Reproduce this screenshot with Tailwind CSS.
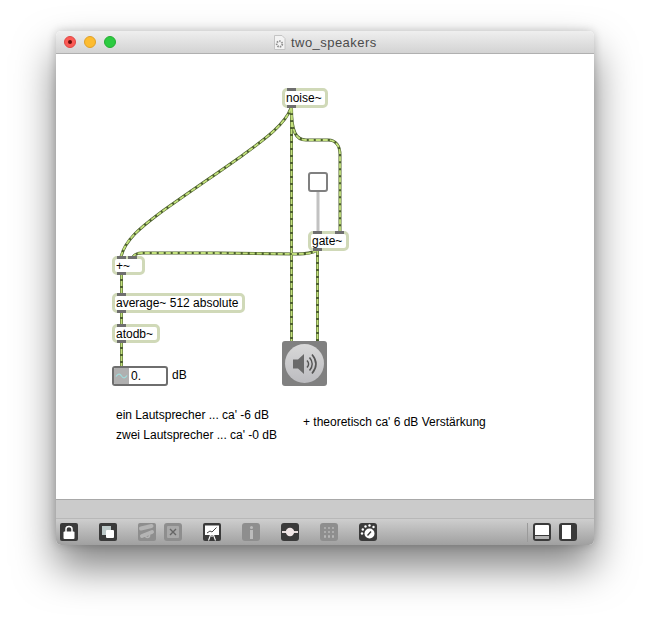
<!DOCTYPE html>
<html lang="en">
<head>
    <meta charset="UTF-8">
    <title>two_speakers</title>
    <script src="https://cdn.jsdelivr.net/npm/@tailwindcss/browser@4"></script>
</head>
<body class="bg-white w-[650px] h-[625px] overflow-hidden pl-[56px] pt-[31px] font-['Liberation_Sans',Arial,sans-serif]">
    <!-- Window -->
    <div class="w-[538px] h-[514px] flex flex-col rounded-[5px] overflow-hidden shadow-[0_22px_40px_rgba(0,0,0,0.5),0_0_10px_rgba(0,0,0,0.2)]">
        <!-- Title bar -->
        <div class="h-[23px] shrink-0 relative flex items-center pl-[8px] gap-[8px] bg-gradient-to-b from-[#efefef] to-[#d3d3d3] border-b border-[#b0b0b0]">
            <div class="w-[12px] h-[12px] rounded-full bg-[#fb5b55] border border-[#df4744] flex items-center justify-center"><div class="w-[4px] h-[4px] rounded-full bg-[#6b0d0a]"></div></div>
            <div class="w-[12px] h-[12px] rounded-full bg-[#fdbc30] border border-[#dfa028]"></div>
            <div class="w-[12px] h-[12px] rounded-full bg-[#2ccb41] border border-[#25ad32]"></div>
            <div class="absolute left-[217px] top-[4px] flex items-center gap-[5px]">
                <svg width="13" height="15" viewBox="0 0 13 15"><path d="M1.500 .5H9L12 3.500V14.500H1.500Z" fill="#f3f3f3" stroke="#c4c4c4"/><circle cx="6.500" cy="9" r="2.800" fill="none" stroke="#8e8e8e" stroke-width="1.800" stroke-dasharray="1.500 1"/></svg>
                <span class="text-[13px] leading-[15px] text-[#4b4b4b] tracking-[0.45px]">two_speakers</span>
            </div>
        </div>

        <!-- Patcher canvas: objects sit at their own places on it -->
        <div class="h-[445px] shrink-0 relative bg-white text-[12px] leading-[15px] text-black">
            <svg class="absolute left-0 top-0" width="538" height="445" viewBox="56 54 538 445" fill="none">
                <defs>
                    <path id="c1" d="M291 108C285 125 262 141 243 155C225 168 185 195 160 213C140 228 125 240 121 257"/>
                    <path id="c2" d="M291.500 108V341"/>
                    <path id="c3" d="M291.500 108C291.500 132 296 140 306 140H328C336 140 340 146 340 155V232"/>
                    <path id="c4" d="M317 250C313 253 308 254 295 254L217 253H142C138 253 135 254 133 257"/>
                    <path id="c5" d="M317.500 250V341"/>
                    <path id="c6" d="M121.500 274V293"/>
                    <path id="c7" d="M121.500 312V324"/>
                    <path id="c8" d="M121.500 342V366"/>
                </defs>
                <path d="M318 192V232" stroke="#c2c2c2" stroke-width="3"/>
                <g stroke="#4c5f2e" stroke-width="3">
                    <use href="#c1"/><use href="#c2"/><use href="#c3"/><use href="#c4"/><use href="#c5"/><use href="#c6"/><use href="#c7"/><use href="#c8"/>
                </g>
                <g stroke="#c2e07c" stroke-width="1.800" stroke-dasharray="5 2">
                    <use href="#c1"/><use href="#c2"/><use href="#c3"/><use href="#c4"/><use href="#c5"/><use href="#c6"/><use href="#c7"/><use href="#c8"/>
                </g>
            </svg>

            <!-- noise~ -->
            <div class="absolute left-[226px] top-[34px] w-[46px] h-[20px] rounded-[5px] border-[3px] border-[#d0d9b8] bg-white pl-[1px] whitespace-nowrap">noise~</div>
            <div class="absolute left-[231px] top-[34px] w-[9px] h-[3px] bg-[#6e6e6e]"></div>
            <div class="absolute left-[231px] top-[51px] w-[9px] h-[3px] bg-[#6e6e6e]"></div>

            <!-- toggle -->
            <div class="absolute left-[252px] top-[118px] w-[20px] h-[20px] rounded-[3px] border-2 border-[#808080] bg-white"></div>

            <!-- gate~ -->
            <div class="absolute left-[252px] top-[177px] w-[41px] h-[20px] rounded-[5px] border-[3px] border-[#d0d9b8] bg-white pl-[1px] whitespace-nowrap">gate~</div>
            <div class="absolute left-[257px] top-[177px] w-[9px] h-[3px] bg-[#6e6e6e]"></div>
            <div class="absolute left-[279px] top-[177px] w-[9px] h-[3px] bg-[#6e6e6e]"></div>
            <div class="absolute left-[257px] top-[194px] w-[9px] h-[3px] bg-[#6e6e6e]"></div>

            <!-- +~ -->
            <div class="absolute left-[56px] top-[202px] w-[33px] h-[19px] rounded-[5px] border-[3px] border-[#d0d9b8] bg-white pl-[1px] whitespace-nowrap">+~</div>
            <div class="absolute left-[61px] top-[202px] w-[9px] h-[3px] bg-[#6e6e6e]"></div>
            <div class="absolute left-[72px] top-[202px] w-[9px] h-[3px] bg-[#6e6e6e]"></div>
            <div class="absolute left-[61px] top-[218px] w-[9px] h-[3px] bg-[#6e6e6e]"></div>

            <!-- average~ -->
            <div class="absolute left-[56px] top-[239px] w-[133px] h-[20px] rounded-[5px] border-[3px] border-[#d0d9b8] bg-white pl-[1px] whitespace-nowrap">average~ 512 absolute</div>
            <div class="absolute left-[61px] top-[239px] w-[9px] h-[3px] bg-[#6e6e6e]"></div>
            <div class="absolute left-[61px] top-[256px] w-[9px] h-[3px] bg-[#6e6e6e]"></div>

            <!-- atodb~ -->
            <div class="absolute left-[56px] top-[270px] w-[48px] h-[19px] rounded-[5px] border-[3px] border-[#d0d9b8] bg-white pl-[1px] whitespace-nowrap">atodb~</div>
            <div class="absolute left-[61px] top-[270px] w-[9px] h-[3px] bg-[#6e6e6e]"></div>
            <div class="absolute left-[61px] top-[286px] w-[9px] h-[3px] bg-[#6e6e6e]"></div>

            <!-- number~ box -->
            <div class="absolute left-[56px] top-[312px] w-[56px] h-[20px] rounded-[3px] border-2 border-[#6e6e6e] bg-white flex items-center overflow-hidden">
                <div class="w-[15px] h-full bg-[#b0b0b0] flex items-center justify-center">
                    <svg width="13" height="6" viewBox="0 0 13 6" fill="none"><path d="M1 3.500C3 .5 5 .5 6.500 3C8 5.500 10 5.500 12 2.500" stroke="#9fdcdc" stroke-width="1.300"/></svg>
                </div>
                <span class="pl-[2px]">0.</span>
            </div>
            <div class="absolute left-[116px] top-[314px]">dB</div>

            <!-- ezdac~ -->
            <div class="absolute left-[226px] top-[287px] w-[45px] h-[45px] rounded-[3px] bg-[#808080] flex items-center justify-center">
                <div class="w-[39px] h-[39px] rounded-full bg-gradient-to-b from-[#d8d8d8] to-[#bcbcc0] flex items-center justify-center">
                    <svg width="30" height="26" viewBox="0 0 30 26" fill="none">
                        <path d="M3 8.500H8L14 3V23L8 17.500H3Z" fill="#6a6a6a"/>
                        <path d="M17 9.500C19 11.500 19 14.500 17 16.500" stroke="#555" stroke-width="1.600"/>
                        <path d="M19.500 6.500C23 10.500 23 15.500 19.500 19.500" stroke="#555" stroke-width="1.600"/>
                        <path d="M22 3.500C27 9.500 27 16.500 22 22.500" stroke="#555" stroke-width="1.600"/>
                    </svg>
                </div>
            </div>

            <!-- comments -->
            <div class="absolute left-[60px] top-[354px] whitespace-nowrap">ein Lautsprecher ... ca' -6 dB</div>
            <div class="absolute left-[60px] top-[374px] whitespace-nowrap">zwei Lautsprecher ... ca' -0 dB</div>
            <div class="absolute left-[247px] top-[361px] whitespace-nowrap">+ theoretisch ca' 6 dB Verstärkung</div>
        </div>

        <!-- Empty band above the toolbar -->
        <div class="h-[20px] shrink-0 bg-[#cbcbcb] border-t border-b border-t-[#a8a8a8] border-b-[#b8b8b8]"></div>

        <!-- Toolbar -->
        <div class="flex-1 flex items-center pl-[4px] bg-gradient-to-b from-[#cecece] to-[#a0a0a0] border-b border-[#8f8f8f]">
            <!-- lock -->
            <div class="w-[18px] h-[18px] rounded-[2px] bg-[#3a3a3a] flex items-center justify-center">
                <svg width="14" height="14" viewBox="0 0 14 14" fill="none"><path d="M4 7V4C4 .8 10 .8 10 4V7" stroke="#fff" stroke-width="1.500"/><rect x="1.500" y="6.500" width="11" height="7.500" rx="1" fill="#fff"/></svg>
            </div>
            <!-- presentation layers -->
            <div class="ml-[21px] w-[18px] h-[18px] rounded-[2px] bg-[#3a3a3a] flex items-center justify-center">
                <svg width="14" height="14" viewBox="0 0 14 14"><rect x="1" y="1" width="9" height="9" fill="#bcc8c8"/><rect x="5" y="5" width="8" height="8" rx="1" fill="#fff"/></svg>
            </div>
            <!-- cylinders, disabled -->
            <div class="ml-[21px] w-[18px] h-[18px] rounded-[2px] bg-[#8e8e8e] flex items-center justify-center">
                <svg width="18" height="18" viewBox="0 0 18 18" fill="none" stroke="#b4b4b4" stroke-linecap="round" stroke-width="4"><path d="M3 5.500L13.500 3"/><path d="M4 13L14 9"/><circle cx="9.500" cy="12.500" r=".8"/></svg>
            </div>
            <div class="ml-[8px] w-[18px] h-[18px] rounded-[3px] bg-[#8e8e8e] flex items-center justify-center">
                <div class="w-[12px] h-[12px] bg-[#a9a9a9] rounded-[1px] flex items-center justify-center">
                    <svg width="8" height="8" viewBox="0 0 8 8" stroke="#666" stroke-width="1.400"><path d="M1 1L7 7M7 1L1 7"/></svg>
                </div>
            </div>
            <!-- presentation chart -->
            <div class="ml-[21px] w-[18px] h-[18px] rounded-[2px] bg-[#3a3a3a] flex items-center justify-center">
                <svg width="16" height="17" viewBox="0 0 16 17" fill="none"><rect x="1" y="1.500" width="14" height="9.500" fill="#fff"/><path d="M3 9L6 7L8 8L12.500 3.500" stroke="#444" stroke-width="1"/><path d="M8 11V13M6.500 11L4.500 16.500M9.500 11L11.500 16.500" stroke="#fff" stroke-width="1.100"/></svg>
            </div>
            <!-- info -->
            <div class="ml-[21px] w-[18px] h-[18px] rounded-[3px] bg-[#8e8e8e] flex flex-col items-center justify-center gap-[1px]">
                <div class="w-[3px] h-[3px] rounded-full bg-[#bcbcbc]"></div>
                <div class="w-[3px] h-[9px] bg-[#bcbcbc]"></div>
            </div>
            <!-- object palette dot -->
            <div class="ml-[21px] w-[18px] h-[18px] rounded-[3px] bg-[#3a3a3a] flex items-center justify-center">
                <svg width="16" height="10" viewBox="0 0 16 10"><rect x="0" y="4" width="16" height="2" fill="#e6dcdc"/><circle cx="8" cy="5" r="4.200" fill="#f0e6e6"/></svg>
            </div>
            <!-- grid -->
            <div class="ml-[21px] w-[18px] h-[18px] rounded-[3px] bg-[#8e8e8e] grid grid-cols-3 gap-[2px] p-[3.500px]">
                <div class="bg-[#b6b6b6] rounded-full"></div><div class="bg-[#b6b6b6] rounded-full"></div><div class="bg-[#b6b6b6] rounded-full"></div>
                <div class="bg-[#b6b6b6] rounded-full"></div><div class="bg-[#b6b6b6] rounded-full"></div><div class="bg-[#b6b6b6] rounded-full"></div>
                <div class="bg-[#b6b6b6] rounded-full"></div><div class="bg-[#b6b6b6] rounded-full"></div><div class="bg-[#b6b6b6] rounded-full"></div>
            </div>
            <!-- dial -->
            <div class="ml-[21px] w-[18px] h-[18px] rounded-[3px] bg-[#3a3a3a] flex items-center justify-center">
                <svg width="16" height="16" viewBox="0 0 16 16" fill="#fff"><circle cx="9.500" cy="9.500" r="5"/><path d="M7.500 11.500L11 7.500" stroke="#3a3a3a" stroke-width="1.300"/><circle cx="2" cy="9.500" r="1.200"/><circle cx="2.800" cy="5.500" r="1.200"/><circle cx="5.500" cy="2.500" r="1.200"/><circle cx="9.500" cy="1.500" r="1.200"/><circle cx="13.500" cy="3" r="1.200"/></svg>
            </div>
            <!-- sidebar buttons -->
            <div class="ml-auto mr-[17px] h-[26px] flex items-center">
                <div class="w-px h-[19px] bg-[#9a9a9a] mr-[5px]"></div>
                <div class="w-[18px] h-[18px] rounded-[3px] border-2 border-[#3a3a3a] bg-white flex flex-col justify-end">
                    <div class="h-[4px] bg-[#b4b4b4] border-t border-[#3a3a3a]"></div>
                </div>
                <div class="ml-[8px] w-[18px] h-[18px] rounded-[3px] bg-[#3a3a3a] flex items-center justify-start pl-[3px]">
                    <div class="w-[9px] h-[14px] bg-white"></div>
                </div>
            </div>
        </div>
    </div>
</body>
</html>
